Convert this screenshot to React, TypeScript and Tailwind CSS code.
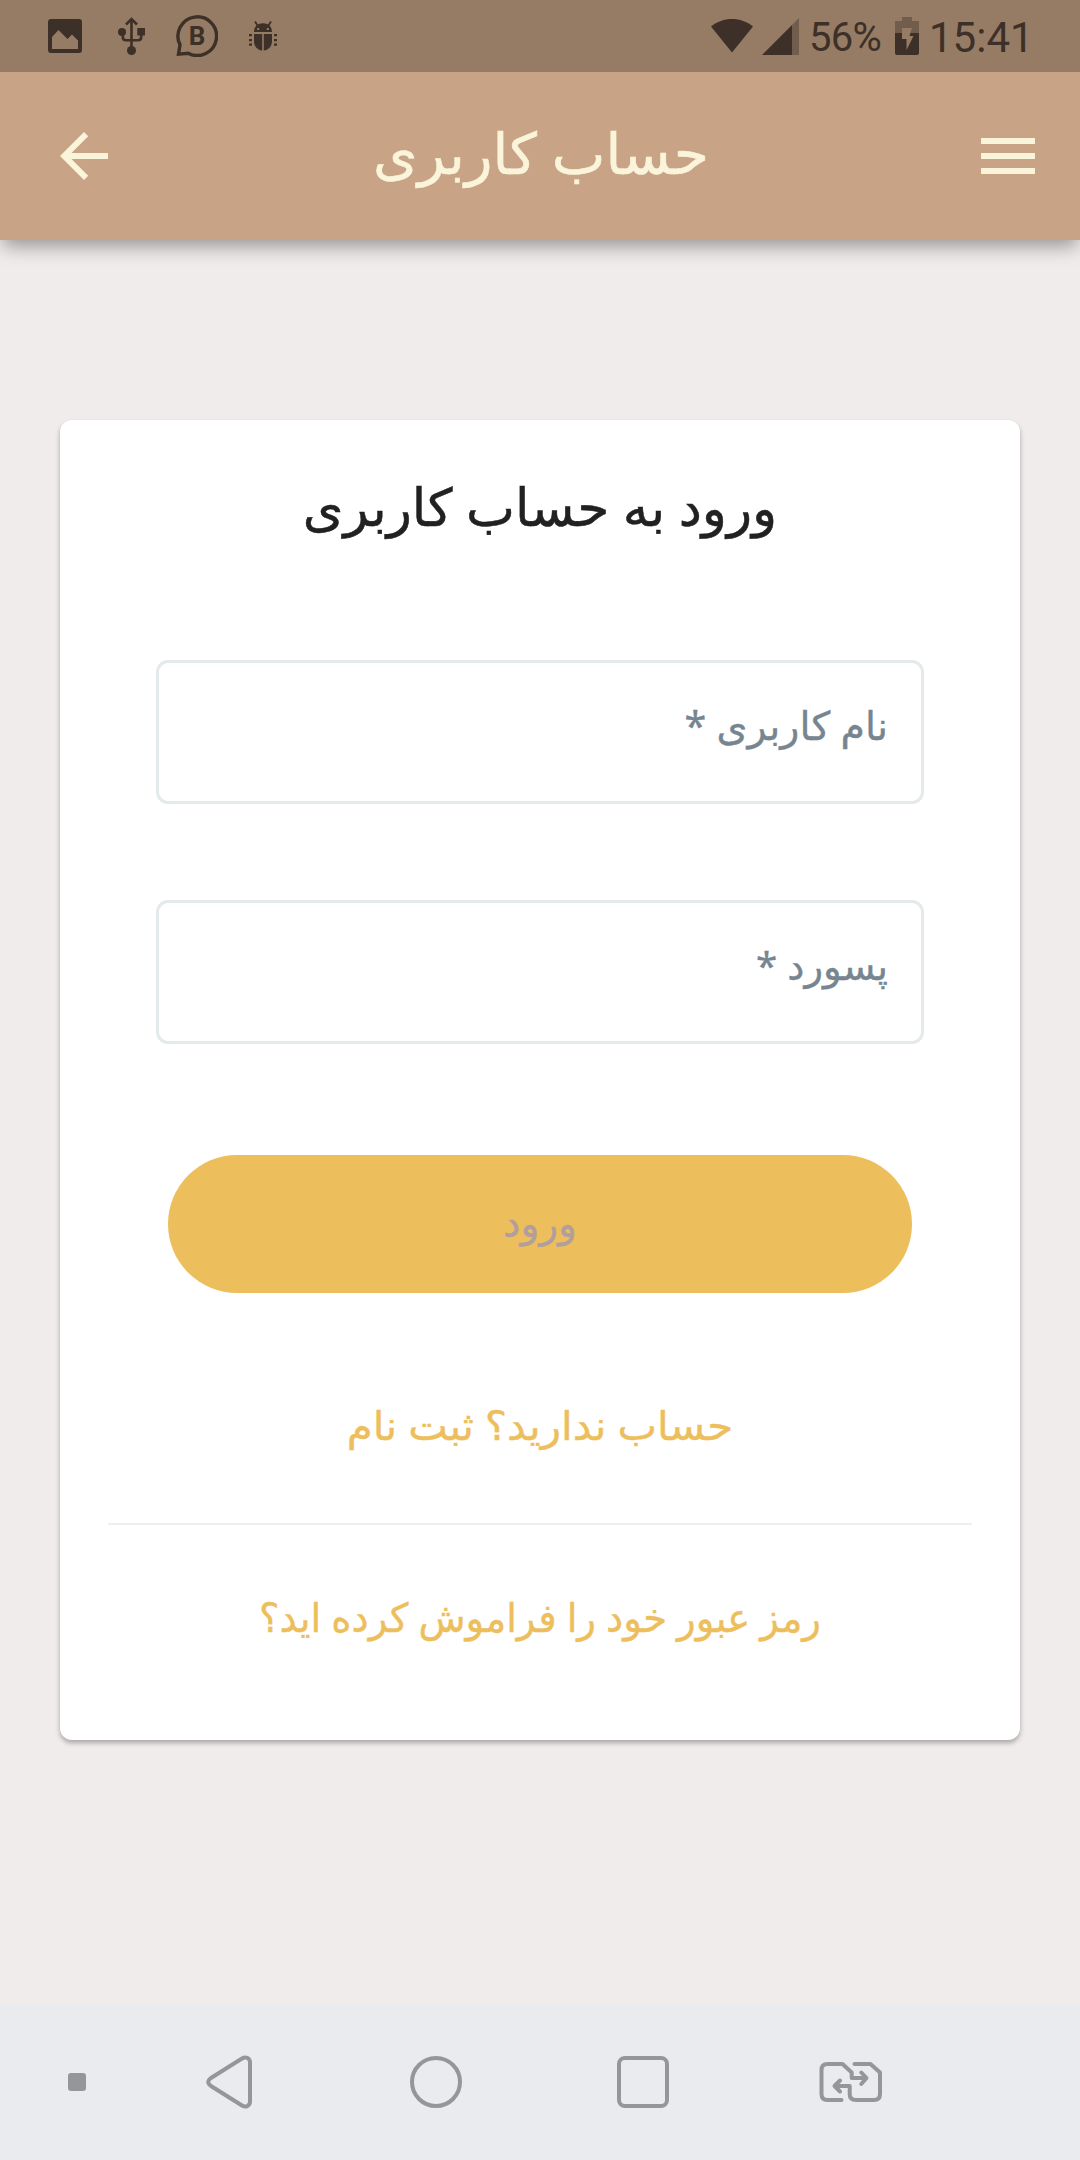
import React from 'react';

interface FieldProps {
  label: string;
  labelClass: string;
}

const StatusBar: React.FC = () => {
  return (
    <div className="relative z-10 h-[72px] bg-[#967b65] flex items-center text-[#3c3028] font-['Roboto',sans-serif]">
      <svg className="ml-12 shrink-0" width="34" height="34" viewBox="0 0 34 34" fill="currentColor">
        <path fillRule="evenodd" d="M3 0H31Q34 0 34 3V31Q34 34 31 34H3Q0 34 0 31V3Q0 0 3 0ZM4 18V30H30V21.5L24 15.5L19.5 20L10.5 11Z" />
      </svg>
      <svg className="ml-9 shrink-0" width="28" height="38" viewBox="0 0 28 38" fill="none" stroke="currentColor" strokeWidth="2.6">
        <path d="M13.5 33V2M8 7.5L13.5 2L19 7.5M4.8 14V20Q4.8 23.2 8 23.2H20Q23.2 23.2 23.2 20V14" />
        <circle cx="4" cy="15" r="4" fill="currentColor" stroke="none" />
        <rect x="19.3" y="11" width="7.7" height="7.5" fill="currentColor" stroke="none" />
        <circle cx="13.5" cy="33.5" r="4.5" fill="currentColor" stroke="none" />
      </svg>
      <div className="relative ml-[30px] size-[42px] shrink-0">
        <svg width="42" height="42" viewBox="0 0 42 42" fill="none" stroke="currentColor">
          <path d="M2.5 39.2L4 29.8A19.3 19.3 0 1 1 12.2 38.2Z" strokeWidth="3.4" />
        </svg>
        <span className="absolute inset-0 text-center text-[26px] leading-[42px] font-bold font-['Roboto',sans-serif]">B</span>
      </div>
      <svg className="ml-[31px] shrink-0" width="28" height="30" viewBox="0 0 28 30" fill="currentColor">
        <path d="M5 11C5 5 9 2.200 14 2.200S23 5 23 11Z" />
        <path d="M8.5 4.5L6 0.5M19.5 4.5L22 0.5" stroke="currentColor" strokeWidth="1.8" />
        <path d="M5 13H13.2V29.5C8 29 5 25 5 20ZM14.8 13H23V20C23 25 20 29 14.8 29.5Z" />
        <path d="M0 13H3V15.3H0ZM0 18H3V20.3H0ZM0 22.5H3V24.8H0ZM25 13H28V15.3H25ZM25 18H28V20.3H25ZM25 22.5H28V24.8H25Z" />
        <path d="M8.2 7H10.2V9H8.2ZM17.8 7H19.8V9H17.8Z" fill="#967b65" />
      </svg>

      <div className="ml-auto mr-[50px] flex items-center">
        <svg className="shrink-0" width="42" height="34" viewBox="0 0 42 34" fill="currentColor">
          <path d="M0 7.500C12 -2.500 30 -2.500 42 7.500L21 33.500Z" />
        </svg>
        <svg className="ml-[9px] shrink-0" width="37" height="37" viewBox="0 0 37 37" fill="currentColor">
          <path d="M0 37L30 7V37Z" />
          <path d="M30 7L37 0V37H30Z" opacity="0.400" />
        </svg>
        <span className="ml-2.5 w-[76px] text-[40px] leading-[72px] tracking-[-0.7px] pt-[3px]">56%</span>
        <svg className="ml-2.5 shrink-0" width="24" height="38" viewBox="0 0 24 38" fill="currentColor">
          <path d="M7 0H17V4H24V16H0V4H7Z" opacity="0.4" />
          <path d="M0 16H24V36Q24 38 22 38H2Q0 38 0 36Z" />
          <path d="M7 11H17L14.5 19H18.5L11.5 33V22H7Z" fill="#967b65" />
        </svg>
        <span className="ml-2.5 w-[101px] text-[42px] leading-[72px] pt-[3px] whitespace-nowrap">15:41</span>
      </div>
    </div>
  );
};

const Header: React.FC = () => {
  return (
    <header className="h-[168px] px-9 bg-[#c8a385] text-[#f9f4da] flex items-center justify-between shadow-[0_9px_18px_-3px_rgba(0,0,0,0.38)]">
      <svg className="ml-3" width="72" height="72" viewBox="0 0 24 24" fill="currentColor">
        <path d="M20 11H7.830l5.590-5.590L12 4l-8 8 8 8 1.410-1.410L7.830 13H20v-2z" />
      </svg>
      <h1 dir="rtl" className="mr-2.5 mb-[9px] text-[57px] leading-[72px] [-webkit-text-stroke:0.6px]">حساب کاربری</h1>
      <svg width="72" height="72" viewBox="0 0 24 24" fill="currentColor">
        <path d="M3 18h18v-2H3v2zm0-5h18v-2H3v2zm0-7v2h18V6H3z" />
      </svg>
    </header>
  );
};

const Field: React.FC<FieldProps> = ({ label, labelClass }) => {
  return (
    <div dir="rtl" className="h-36 border-3 border-[#e4e9eb] rounded-xl px-[33px] pt-8 text-[#778591]">
      <span className={`block leading-[60px] [-webkit-text-stroke:0.4px] ${labelClass}`}>{label}</span>
    </div>
  );
};

const NavBar: React.FC = () => {
  return (
    <nav className="h-[156px] bg-[#e9ebee] flex items-center text-[#959698]">
      <div className="ml-[68px] size-[18px] rounded-[3px] bg-[#959698]"></div>
      <svg className="ml-[120px]" width="46" height="54" viewBox="0 0 46 54" fill="none" stroke="currentColor" strokeWidth="4">
        <path d="M36 3.500L5 23Q-0.500 27 5 31L36 50.500C40 53 44 50.500 44 46.500V7.500C44 3.500 40 1 36 3.500Z" />
      </svg>
      <div className="ml-[158px] size-[52px] rounded-full border-4 border-[#959698]"></div>
      <div className="ml-[155px] size-[52px] rounded-[8px] border-4 border-[#959698]"></div>
      <svg className="ml-[150px]" width="64" height="40" viewBox="0 0 64 40" fill="none" stroke="currentColor" strokeWidth="4" strokeLinecap="round" strokeLinejoin="round">
        <path d="M22.500 38H8.500Q2.500 38 2.500 32V8Q2.500 2 8.500 2H23.500L32.700 10.500V16H47.500M42.300 10.500L47.500 16L42.300 22" />
        <path d="M35.500 2H51.500L61 10.500V32Q61 38 55 38H37Q30.700 38 30.700 32V24H15.500M21 18.500L15.500 24L21 29.500" />
      </svg>
    </nav>
  );
};

const App: React.FC = () => {
  return (
    <div className="w-[1080px] h-[2160px] bg-[#f0eceb] flex flex-col font-['Noto_Sans','DejaVu_Sans',sans-serif]">
      <StatusBar />
      <Header />

      <main className="flex-1 px-15 pt-[180px]">
        <div className="h-[1320px] bg-white rounded-xl shadow-[0_3px_5px_rgba(0,0,0,0.3)] flex flex-col">
          <h2 dir="rtl" className="mt-11 mb-1 text-center text-[52px] leading-[84px] text-[#212121] [-webkit-text-stroke:0.5px]">ورود به حساب کاربری</h2>

          <div className="mt-[108px] px-24 flex flex-col gap-24">
            <Field label="نام کاربری *" labelClass="text-[39.5px]" />
            <Field label="پسورد *" labelClass="text-[38.5px]" />
          </div>

          <button dir="rtl" className="mt-[111px] mx-[108px] h-[138px] shrink-0 rounded-full bg-[#edbe5c] text-[#b29e9d] text-[39px] pb-[3px] [-webkit-text-stroke:0.4px]">
            ورود
          </button>

          <a dir="rtl" className="mt-[102px] text-center text-[40px] leading-[60px] text-[#edbe5c] scale-x-105 [-webkit-text-stroke:0.4px]">حساب ندارید؟ ثبت نام</a>
          <div className="mt-[68px] mx-12 h-0.5 bg-[#efefef]"></div>
          <a dir="rtl" className="mt-[62px] text-center text-[40px] leading-[60px] text-[#edbe5c] scale-x-[0.965] [-webkit-text-stroke:0.4px]">رمز عبور خود را فراموش کرده اید؟</a>
        </div>
      </main>

      <NavBar />
    </div>
  );
};

export default App;
